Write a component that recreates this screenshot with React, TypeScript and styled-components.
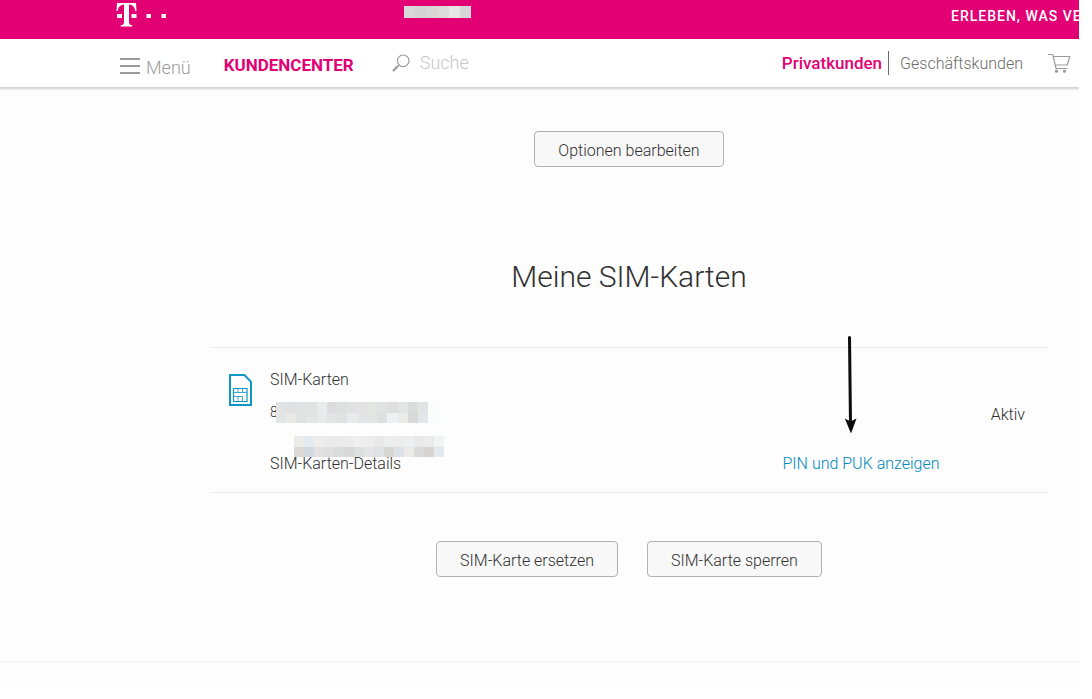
import React from "react";
import styled, { createGlobalStyle } from "styled-components";

const magenta = "#e20074";

const GlobalStyle = createGlobalStyle`
  * { box-sizing: border-box; }
  body {
    margin: 0;
    background: #ffffff;
    color: #303030;
    font-family: Roboto, "Liberation Sans", sans-serif;
    font-size: 16px;
    font-weight: 300;
    line-height: 24px;
  }
  button, input { font: inherit; color: inherit; }
`;

const Page = styled.div`
  margin-right: 13px;
  min-height: 686px;
  background: #fdfdfd;
  overflow: hidden;
`;

const BrandBar = styled.div`
  display: flex;
  align-items: flex-start;
  height: 39px;
  padding-left: 116px;
  background: ${magenta};
  color: #ffffff;
  overflow: hidden;
`;

const BrandLink = styled.a`
  display: block;
  padding-top: 2px;
  line-height: 0;
`;

const Account = styled.div`
  margin: 6px auto 0 236px;
  line-height: 0;
`;

const Claim = styled.p`
  flex: none;
  width: 128px;
  margin: 4px 0 0;
  font-size: 14px;
  font-weight: 500;
  letter-spacing: 1px;
  white-space: nowrap;
`;

const NavBar = styled.header`
  display: flex;
  align-items: center;
  height: 49px;
  padding: 0 8px 0 120px;
  background: #ffffff;
  border-bottom: 1px solid #d4d4d4;
  box-shadow: 0 1px 0 #dedede, 0 2px 0 #ebebeb;
`;

const MenuButton = styled.button`
  display: flex;
  align-items: baseline;
  gap: 6px;
  margin-top: 10px;
  padding: 0;
  border: 0;
  background: none;
  color: #9b9b9b;
  font-size: 18px;
`;

const CenterLink = styled.a`
  margin: 4px 0 0 33px;
  color: ${magenta};
  font-size: 17px;
  font-weight: 700;
  text-decoration: none;
`;

const Search = styled.label`
  display: flex;
  align-items: center;
  gap: 10px;
  flex: 1;
  min-width: 0;
  margin-left: 38px;
`;

const SearchInput = styled.input`
  flex: 1;
  min-width: 0;
  padding: 0;
  border: 0;
  outline: 0;
  background: none;
  font-size: 18px;
  &::placeholder { color: #c6c6c6; opacity: 1; }
`;

const Audience = styled.nav`
  display: flex;
  align-items: center;
`;

const AudienceLink = styled.a<{ $active?: boolean }>`
  padding: ${(p) => (p.$active ? "0 6px 0 0" : "2px 0 0 11px")};
  border-right: ${(p) => (p.$active ? "1px solid #6b6b6b" : "0")};
  color: ${(p) => (p.$active ? magenta : "#6b6b6b")};
  font-size: ${(p) => (p.$active ? 17 : 16)}px;
  font-weight: ${(p) => (p.$active ? 500 : 300)};
  text-decoration: none;
`;

const CartLink = styled.a`
  margin-left: 25px;
  line-height: 0;
`;

const Content = styled.main`
  display: flex;
  flex-direction: column;
  align-items: center;
  padding: 43px 31px 84px 210px;
  border-bottom: 2px solid #f5f5f5;
`;

const ActionButton = styled.button`
  height: 36px;
  padding: 4px 23px 0;
  border: 1px solid #b2b2b2;
  border-radius: 4px;
  background: #f8f8f8;
  white-space: nowrap;
`;

const Title = styled.h1`
  margin: 90px 0 50px;
  font-size: 30px;
  font-weight: 300;
  line-height: 40px;
`;

const SimCard = styled.section`
  display: grid;
  grid-template-columns: 42px 32fr 13fr auto;
  width: 100%;
  height: 146px;
  padding: 20px 23px 16px 18px;
  border: solid #ebebeb;
  border-width: 1px 0;
`;

const SimIconCell = styled.div`
  padding-top: 6px;
  line-height: 0;
`;

const SimDetails = styled.div`
  display: flex;
  flex-direction: column;
`;

const Line = styled.span`
  position: relative;
`;

const SimNumber = styled(Line)`
  margin: 8px 0 28px;
  font-size: 14px;
`;

const Overlay = styled.span<{ $left: number; $top: number }>`
  position: absolute;
  left: ${(p) => p.$left}px;
  top: ${(p) => p.$top}px;
  line-height: 0;
`;

const PinLink = styled.a`
  position: relative;
  align-self: end;
  justify-self: start;
  color: #0089b9;
  text-decoration: none;
  white-space: nowrap;
`;

const Status = styled.span`
  align-self: center;
  margin-bottom: 14px;
`;

const Actions = styled.div`
  display: flex;
  gap: 29px;
  margin-top: 48px;
`;

function Mosaic({ rows, width, height }: { rows: string[][]; width: number; height: number }) {
  return (
    <svg width={width} height={height} viewBox={`0 0 ${width} ${height}`} shapeRendering="crispEdges" aria-hidden="true">
      {rows.map((row, y) =>
        row.map((fill, x) => (
          <rect
            key={`${x}-${y}`}
            x={(x * width) / row.length}
            y={(y * height) / rows.length}
            width={width / row.length}
            height={height / rows.length}
            fill={fill}
          />
        ))
      )}
    </svg>
  );
}

const accountMask = [["#d9d9d9", "#d3d4d6", "#d9d8d6", "#dbdbdb", "#e6e6e6", "#d5d6d5"]];

const numberMask = [
  ["#e2e3e5", "#dfe0e1", "#e1e3e3", "#e2e4e4", "#e9ecec", "#dcdcdc", "#dedfdf", "#e2e2e3", "#e3e3e5", "#e4e5e1", "#e2e3e4", "#dfdfdf", "#e3e4e4", "#dcdcdd", "#e2e3e5", "#fbfdfd"],
  ["#e4e5e6", "#e8e8e6", "#e0e2e2", "#e3e4e4", "#e9ebeb", "#e4e4e4", "#e0e1e1", "#e9eaed", "#e3e4e6", "#e4e6e5", "#dfe1e1", "#eff0f4", "#eaeae9", "#d9d9da", "#e5e6ea", "#fbfdfd"],
];

const detailMask = [
  ["#ebebea", "#e5eaee", "#ededed", "#ebebec", "#eaeaea", "#ececec", "#f0eff0", "#ededee", "#e8e9e8", "#eceef0", "#eeecea", "#edeef0", "#e8e9e8", "#ebebeb", "#f2f3f3"],
  ["#dbdad7", "#d4dae0", "#e1e1e1", "#dfdfdf", "#dbdddd", "#d8d8d8", "#dedfdf", "#e4e3e5", "#dfe1e5", "#d8d8d3", "#dde2e6", "#ecebe9", "#dadbd9", "#d7d5d2", "#e5e9ee"],
];

function TelekomLogo() {
  return (
    <svg width="52" height="25" viewBox="0 0 52 25" fill="#ffffff" role="img" aria-label="Telekom">
      <path d="M1 1h19l.5 8h-1.200c-.6-4-2.400-6.300-6.300-6.600V20c0 2.300.8 3 3.200 3.100V24.500H4.800V23.100C7.200 23 8 22.300 8 20V2.400C4.100 2.700 2.300 5 1.700 9H.5z" />
      <path d="M1 12h5v4H1zM15.500 12h5v4h-5zM30.500 12h4.500v4H30.500zM45.500 12h4.500v4h-4.500z" />
    </svg>
  );
}

function MenuIcon() {
  return (
    <svg width="20" height="16" viewBox="0 0 20 16" fill="#9b9b9b" aria-hidden="true">
      <path d="M0 0h20v2H0zM0 7h20v2H0zM0 14h20v2H0z" />
    </svg>
  );
}

function SearchIcon() {
  return (
    <svg width="18" height="18" viewBox="0 0 18 18" fill="none" stroke="#9b9b9b" aria-hidden="true">
      <circle cx="11.200" cy="6.800" r="5.800" strokeWidth="1.200" />
      <path d="M7 11.200L5.800 12.300" strokeWidth="1.200" />
      <path d="M5.900 12L1 17" strokeWidth="2.200" />
    </svg>
  );
}

function CartIcon() {
  return (
    <svg width="23" height="20" viewBox="0 0 23 20" fill="none" stroke="#9b9b9b" strokeWidth="1.200" aria-hidden="true">
      <path d="M0 1.500h4.800L8 15.500h11.500M5.300 3.500h16.500l-2.500 8.500H7.300" />
      <circle cx="8.500" cy="18.200" r="1" fill="#9b9b9b" />
      <circle cx="16.500" cy="18.200" r="1" fill="#9b9b9b" />
    </svg>
  );
}

function SimIcon() {
  return (
    <svg width="25" height="32" viewBox="0 0 25 32" fill="none" stroke="#0f97c7" aria-hidden="true">
      <path d="M2 1h14.500L23 7.800V31H2z" strokeWidth="2" />
      <path d="M5.500 14.500h13.500v13H5.500z" strokeWidth="1.200" />
      <path d="M5.500 18.500h13.500M5.500 22.500h9v5M10 14.500v4M14.500 14.500v4M10 22.500v5" strokeWidth="1" strokeOpacity=".8" />
    </svg>
  );
}

function Arrow() {
  return (
    <svg width="14" height="98" viewBox="0 0 14 98" aria-hidden="true">
      <path d="M5.500 1.500L6.500 88" stroke="#0c0a0b" strokeWidth="3" strokeLinecap="round" />
      <path d="M.8 82.500L6.500 85.500L12.500 82.500L7 97.500z" fill="#0c0a0b" />
    </svg>
  );
}

export default function App() {
  return (
    <>
      <GlobalStyle />
      <Page>
        <BrandBar>
          <BrandLink href="#"><TelekomLogo /></BrandLink>
          <Account><Mosaic rows={accountMask} width={67} height={12} /></Account>
          <Claim>ERLEBEN, WAS VERBINDET.</Claim>
        </BrandBar>
        <NavBar>
          <MenuButton type="button"><MenuIcon />Menü</MenuButton>
          <CenterLink href="#">KUNDENCENTER</CenterLink>
          <Search>
            <SearchIcon />
            <SearchInput type="text" placeholder="Suche" aria-label="Suche" />
          </Search>
          <Audience>
            <AudienceLink href="#" $active>Privatkunden</AudienceLink>
            <AudienceLink href="#">Geschäftskunden</AudienceLink>
          </Audience>
          <CartLink href="#" aria-label="Warenkorb"><CartIcon /></CartLink>
        </NavBar>
        <Content>
          <ActionButton type="button">Optionen bearbeiten</ActionButton>
          <Title>Meine SIM-Karten</Title>
          <SimCard>
            <SimIconCell><SimIcon /></SimIconCell>
            <SimDetails>
              <Line>SIM-Karten</Line>
              <SimNumber>
                8
                <Overlay $left={6} $top={2}><Mosaic rows={numberMask} width={162} height={21} /></Overlay>
              </SimNumber>
              <Line>
                SIM-Karten-Details
                <Overlay $left={24} $top={-16}><Mosaic rows={detailMask} width={150} height={21} /></Overlay>
              </Line>
            </SimDetails>
            <PinLink href="#">
              PIN und PUK anzeigen
              <Overlay $left={61} $top={-116}><Arrow /></Overlay>
            </PinLink>
            <Status>Aktiv</Status>
          </SimCard>
          <Actions>
            <ActionButton type="button">SIM-Karte ersetzen</ActionButton>
            <ActionButton type="button">SIM-Karte sperren</ActionButton>
          </Actions>
        </Content>
      </Page>
    </>
  );
}
